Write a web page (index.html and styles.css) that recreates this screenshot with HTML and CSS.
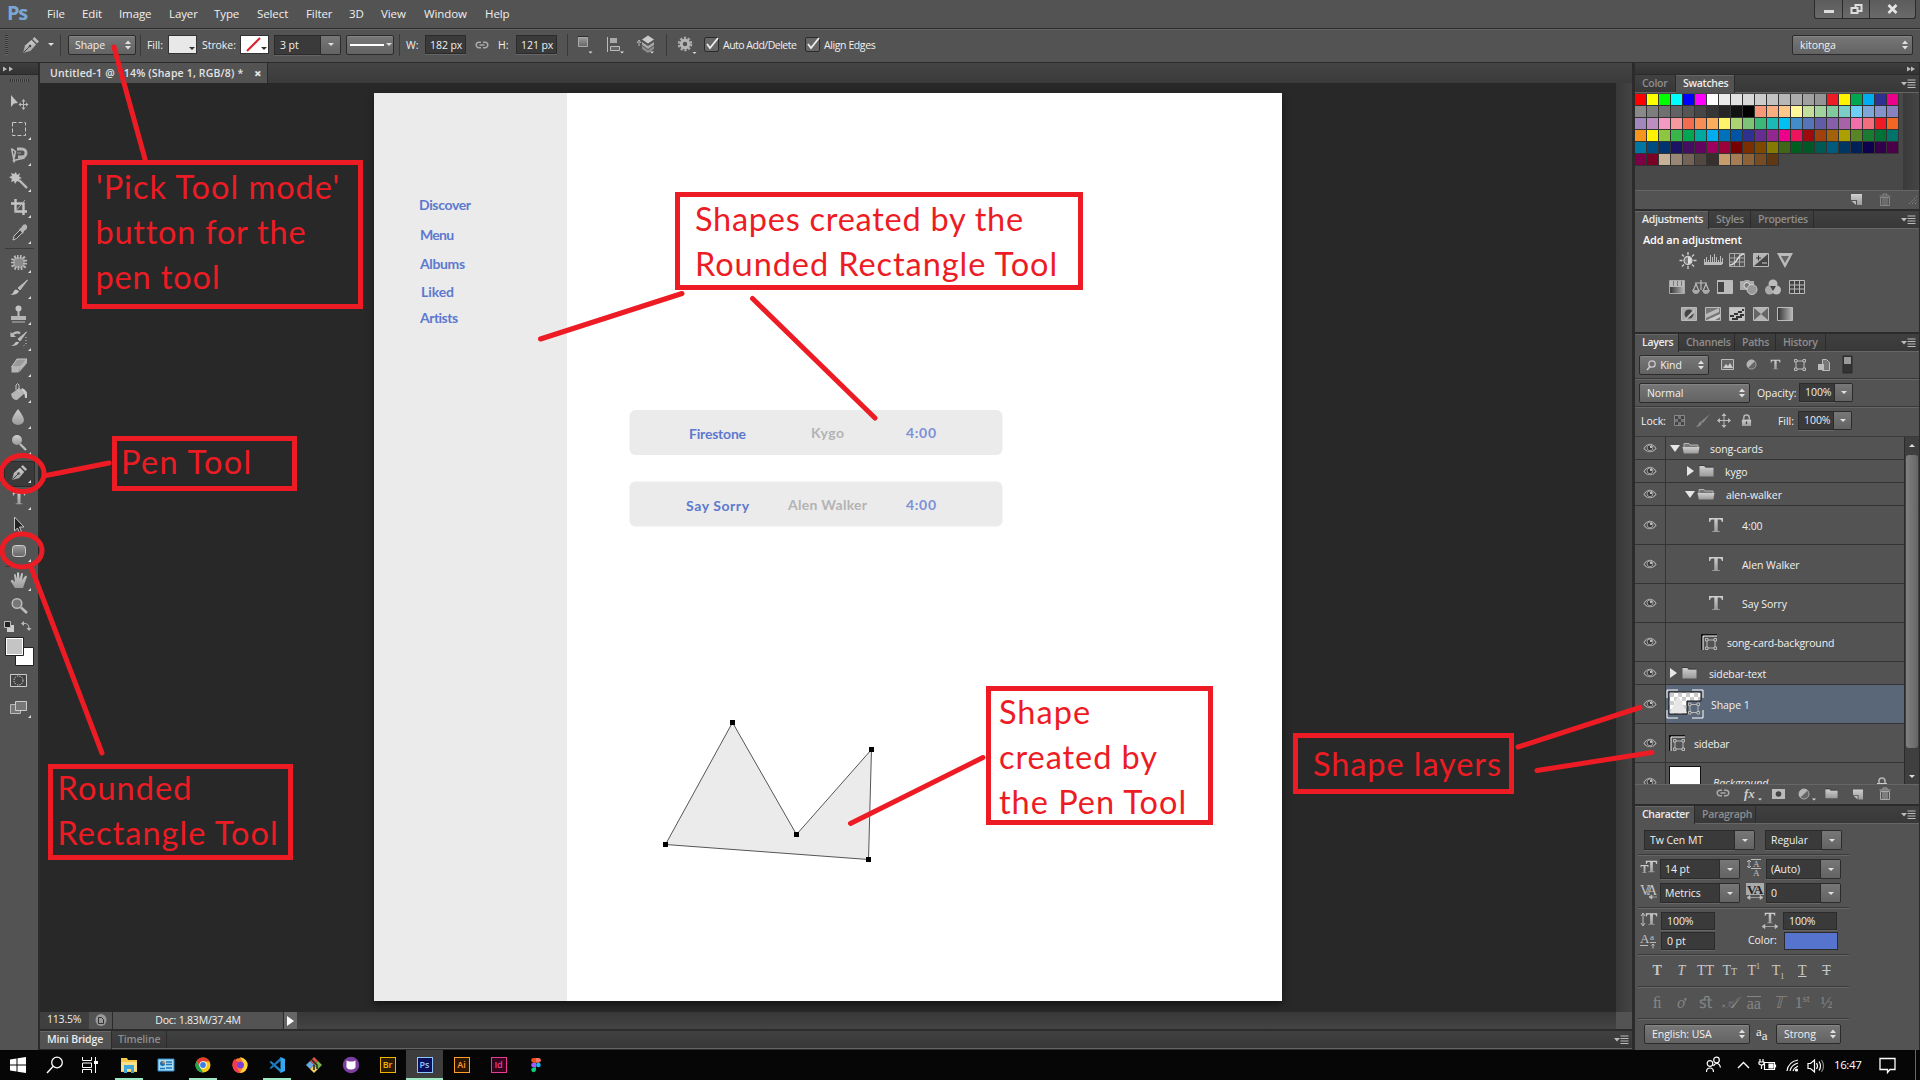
FILE: index.html
```html
<!DOCTYPE html>
<html lang="en">
<head>
<meta charset="utf-8">
<title>Untitled-1 @ 114% (Shape 1, RGB/8)</title>
<link rel="stylesheet" href="styles.css">
</head>
<body>
<svg class="defs" width="0" height="0">
  <defs>
    <linearGradient id="g" x1="0" y1="0" x2="0" y2="1"><stop offset="0" stop-color="#cfcfcf"/><stop offset="1" stop-color="#9a9a9a"/></linearGradient>
    <linearGradient id="gh" x1="0" y1="0" x2="1" y2="0"><stop offset="0" stop-color="#333"/><stop offset="1" stop-color="#bbb"/></linearGradient>
    <linearGradient id="gv" x1="0" y1="0" x2="0" y2="1"><stop offset="0" stop-color="#9a9a9a"/><stop offset="1" stop-color="#666"/></linearGradient>
    <pattern id="chk" width="8" height="8" patternUnits="userSpaceOnUse"><path fill="#fff" d="M0 0h8v8H0z"/><path fill="#ccc" d="M0 0h4v4H0zM4 4h4v4H4z"/></pattern>
  </defs>
  <symbol id="eye" viewBox="0 0 14 10"><path d="M1 5.500C3 2 5 1.200 7 1.200S11 2 13 5.500C11 8 9 8.800 7 8.800S3 8 1 5.500Z" fill="#484848" stroke="#aaa" stroke-width="1.100"/><circle cx="7" cy="4.900" r="2.900" fill="#3a3a3a" stroke="#aaa" stroke-width=".9"/><circle cx="8" cy="4" r="1.100" fill="#ddd"/></symbol>
  <symbol id="fopen" viewBox="0 0 18 12"><path d="M2 5V1.500h5L8 3h8v2" fill="#777" stroke="#b5b5b5"/><path d="M.5 5h17l-1.200 6.500H1.800Z" fill="url(#g)"/></symbol>
  <symbol id="fclosed" viewBox="0 0 15 12"><path d="M.5 1h5l1 1.500h8v9H.5Z" fill="url(#g)"/><path d="M0 .5h5.500l1 1.500h8" fill="none" stroke="#333" stroke-width=".7"/></symbol>
  <symbol id="tee" viewBox="0 0 16 16"><path d="M1 1h14v4h-1.200c-.3-1.800-.8-2.500-2.500-2.500H9.700V13c0 .9.500 1.200 2.300 1.300V15H4v-.7c1.800-.1 2.300-.4 2.300-1.300V2.500H4.700C3 2.500 2.500 3.200 2.200 5H1Z" fill="url(#g)"/></symbol>
  <symbol id="vec" viewBox="0 0 12 12"><path d="M2 2h8v8H2z" fill="none" stroke="#b9b9b9"/><g fill="#555" stroke="#c4c4c4" stroke-width=".9"><path d="M.5.500h2.500V3H.5zM9 .5h2.500V3H9zM.5 9h2.500v2.500H.5zM9 9h2.500v2.500H9z"/></g></symbol>
  <symbol id="pen" viewBox="0 0 18 18"><path d="M1 17 3 9.500 9.500 4 14 8.500 8.500 15Z" fill="url(#g)"/><path d="M1.500 16.500 7.500 10.500" stroke="#444"/><circle cx="8" cy="10" r="1.300" fill="#444"/><path d="M10.500 3 12.500 1 17 5.500 15 7.500Z" fill="#bbb"/></symbol>
  <symbol id="flyout" viewBox="0 0 15 10"><path d="M0 3h6L3 6.500z" fill="#bbb"/><path d="M6.500 1h8M6.500 3.500h8M6.500 6h8M6.500 8.500h8" stroke="#bbb"/></symbol>
  <symbol id="updown" viewBox="0 0 6 10"><path d="M0 4 3 .5 6 4ZM0 6l3 3.500L6 6Z" fill="#e0e0e0"/></symbol>
  <symbol id="newp" viewBox="0 0 11 11"><path d="M0 0h11v11H6V6H0Z" fill="url(#g)"/><path d="M.5 7H5v4Z" fill="#bbb"/></symbol>
  <symbol id="trash" viewBox="0 0 12 13"><path d="M.5 3h11M4 2.500V1h4v1.500" stroke="#aaa" fill="none"/><path d="M1.500 4.500h9v8h-9zM4 4.500v8M6 4.500v8M8 4.500v8" stroke="#aaa" fill="none"/></symbol>
  <symbol id="link" viewBox="0 0 14 8"><path d="M6 1.200H4A2.800 2.800 0 0 0 4 6.800h2M8 1.200h2A2.800 2.800 0 0 1 10 6.800H8M4.500 4h5" fill="none" stroke="#aaa" stroke-width="1.500"/></symbol>
  <symbol id="halfc" viewBox="0 0 12 12"><circle cx="6" cy="6" r="5" fill="#666" stroke="#aaa"/><path d="M9.600 2.400A5 5 0 1 0 2.400 9.600Z" fill="#b5b5b5"/></symbol>
  <symbol id="lock" viewBox="0 0 12 14"><path d="M3 6V4a3 3 0 0 1 6 0v2" fill="none" stroke="#b5b5b5" stroke-width="1.600"/><path d="M1 6h10v7H1z" fill="url(#g)"/><path d="M6 8v3" stroke="#444" stroke-width="1.400"/></symbol>
</svg>

<header class="menubar">
  <span class="pslogo">Ps</span>
  <nav class="menus"><span class="m-file">File</span><span class="m-edit">Edit</span><span class="m-image">Image</span><span class="m-layer">Layer</span><span class="m-type">Type</span><span class="m-select">Select</span><span class="m-filter">Filter</span><span class="m-3d">3D</span><span class="m-view">View</span><span class="m-window">Window</span><span class="m-help">Help</span></nav>
  <div class="winbtns">
    <svg width="27" height="18"><path d="M9 11.500h10" stroke="#ddd" stroke-width="3"/></svg>
    <svg width="27" height="18"><path d="M12.500 5h6v6h-6z" fill="none" stroke="#ddd" stroke-width="2"/><path d="M8.500 8h6v5h-6z" fill="#555" stroke="#ddd" stroke-width="2"/></svg>
    <svg width="46" height="18"><path d="m18.500 5 8 8m0-8-8 8" stroke="#e6e6e6" stroke-width="2.600"/></svg>
  </div>
</header>

<section class="options">
  <i class="vgrip"></i>
  <svg class="o-pen" width="18" height="18"><use href="#pen"/></svg>
  <i class="caret o-caret"></i>
  <i class="vsep s1"></i>
  <span class="combo o-shape">Shape<svg width="6" height="10"><use href="#updown"/></svg></span>
  <i class="vsep s2"></i>
  <span class="o-fill">Fill:</span>
  <span class="chip c1"><i class="dk"></i></span>
  <span class="o-stroke">Stroke:</span>
  <span class="chip c2"><svg width="26" height="17"><path d="M6 15 19 2" stroke="#d8232a" stroke-width="2"/></svg><i class="dk"></i></span>
  <span class="field o-pt">3 pt</span><span class="drop o-ptd"><i class="caret"></i></span>
  <span class="combo o-line"><b></b><i class="caret"></i></span>
  <i class="vsep s3"></i>
  <span class="o-w">W:</span><span class="field o-wf">182 px</span>
  <svg class="o-link" width="14" height="8"><use href="#link"/></svg>
  <span class="o-h">H:</span><span class="field o-hf">121 px</span>
  <i class="vsep s4"></i>
  <svg class="o-ic1" width="100" height="26">
    <path d="M10.500 5.500h9v9h-9z" fill="url(#gv)" stroke="#aaa"/><path d="M10 4.500h10" stroke="#2c2c2c"/>
    <path d="M39.500 5v15" stroke="#bbb"/><path d="M42 6h7v5h-7z" fill="#aaa"/><path d="M42.500 14.500h9v4h-9z" fill="#666" stroke="#bbb"/>
    <path d="M71 14V9.500M69 11l2-3 2 3" fill="none" stroke="#bbb"/>
    <path d="M74 14v3l6 4 6-4v-3l-6 4z" fill="#8c8c8c"/><path d="M74 10v3l6 4 6-4v-3l-6 4z" fill="#a8a8a8"/><path d="m74 7.500 6-4 6 4-6 4z" fill="#cacaca"/>
    <path d="M20.500 19.500h4l-2 2zM52 19.500h4l-2 2zM82 19.500h4l-2 2z" fill="#ddd"/>
  </svg>
  <i class="vsep s5"></i>
  <svg class="o-gear" width="20" height="22"><circle cx="8" cy="10" r="5.800" fill="none" stroke="#aaa" stroke-width="3" stroke-dasharray="2.200 1.450"/><circle cx="8" cy="10" r="3.700" fill="none" stroke="#b5b5b5" stroke-width="3"/><path d="M15.500 18h4l-2 2z" fill="#ddd"/></svg>
  <span class="cb"><svg width="16" height="16"><path d="m4 7 3 4L15 1" fill="none" stroke="#eee" stroke-width="1.800"/></svg></span><span class="o-auto">Auto Add/Delete</span>
  <span class="cb cb2"><svg width="16" height="16"><path d="m4 7 3 4L15 1" fill="none" stroke="#eee" stroke-width="1.800"/></svg></span><span class="o-align">Align Edges</span>
  <span class="combo o-user">kitonga<svg width="6" height="10"><use href="#updown"/></svg></span>
</section>

<main class="workspace">
  <aside class="tools">
    <div class="collapse"><svg width="12" height="6"><path d="M0 .500 4 3 0 5.500zM6 .500l4 2.500-4 2.500z" fill="#bbb"/></svg></div>
    <i class="hgrip"></i>
    <svg class="tool" viewBox="0 0 26 26"><path d="M5 4v12l3-3.500 4-.500Z" fill="#c4c4c4"/><path d="M17.500 9v9M13 13.500h9" stroke="#bbb"/><path d="m17.500 8 2 2.500h-4zM17.500 19l2-2.500h-4zM12.500 13.500l2.500-2v4zM22.500 13.500l-2.500-2v4z" fill="#bbb"/></svg>
    <svg class="tool" viewBox="0 0 26 26"><path d="M6.500 5.500h13v13h-13z" fill="none" stroke="#c8c8c8" stroke-dasharray="4 2"/><path d="M22 23h3v-3z" fill="#ddd"/></svg>
    <svg class="tool" viewBox="0 0 26 26"><path d="m5.500 5.500 4 3-2 9 11-2.500M5.500 5.500l3 14" fill="none" stroke="#bbb" stroke-width="1.500"/><path d="M11 6h5a4 4 0 0 1 0 8h-4" fill="none" stroke="#b5b5b5" stroke-width="3"/><path d="M11 10h4" stroke="#999"/><path d="M22 23h3v-3z" fill="#ddd"/></svg>
    <svg class="tool" viewBox="0 0 26 26"><path d="m10 3 1 3 3-2-1 3.500 3 1.500-3 1 1 3-3-1-2 3-1-3-3 1 1-3-3-2 3-1-1-3 3 1Z" fill="#c4c4c4"/><path d="m13 11 8 8" stroke="#bbb" stroke-width="2.400"/><path d="M22 23h3v-3z" fill="#ddd"/></svg>
    <svg class="tool" viewBox="0 0 26 26"><path d="M9.500 4v12.500H21M5 8.500h12.500V20" fill="none" stroke="#c4c4c4" stroke-width="2.400"/><path d="M9 17 19 5" stroke="#aaa"/><path d="M22 23h3v-3z" fill="#ddd"/></svg>
    <svg class="tool" viewBox="0 0 26 26"><path d="m7 19 1-4 7-7 2.500 2.500-7 7Z" fill="#444" stroke="#c4c4c4"/><path d="m13 8 2-1 2-3q3-2 4 1t-3 5l-1 3Z" fill="#b5b5b5"/><path d="M22 23h3v-3z" fill="#ddd"/></svg>
    <i class="tsep"></i>
    <svg class="tool" viewBox="0 0 26 26"><rect x="7" y="7" width="12" height="11" rx="4" fill="#8a8a8a"/><rect x="7" y="7" width="12" height="11" rx="4" fill="none" stroke="#bbb" stroke-width="4" stroke-dasharray="1.500 1.500"/><path d="M22 23h3v-3z" fill="#ddd"/></svg>
    <svg class="tool" viewBox="0 0 26 26"><path d="M21.500 4 14 14l-2-2Z" fill="#bbb" stroke="#bbb"/><path d="M13 15q-1 4-9 4 3-1 4-4t5 0Z" fill="#c4c4c4"/><path d="M22 23h3v-3z" fill="#ddd"/></svg>
    <svg class="tool" viewBox="0 0 26 26"><circle cx="12.500" cy="6.500" r="3" fill="#c4c4c4"/><path d="M11.500 9h2v5h-2z" fill="#bbb"/><path d="M5 14h15v4H5z" fill="#b5b5b5"/><path d="M6 20h13" stroke="#bbb"/><path d="M22 23h3v-3z" fill="#ddd"/></svg>
    <svg class="tool" viewBox="0 0 26 26"><path d="M20.500 4 14 13l-2-2Z" fill="#bbb" stroke="#bbb"/><path d="M13 14q-1 4-8 4 3-1 4-3t4-1Z" fill="#c4c4c4"/><path d="M5 7.500q6-5 9-2" fill="none" stroke="#bbb" stroke-width="2"/><path d="M4.500 4v5H10Z" fill="#bbb"/><path d="M20 9v7l-4 3" fill="none" stroke="#ccc" stroke-dasharray="1 2"/><path d="M22 23h3v-3z" fill="#ddd"/></svg>
    <svg class="tool" viewBox="0 0 26 26"><path d="M11 5h10l-7 8H5.500Z" fill="#9a9a9a" stroke="#c4c4c4"/><path d="M5.500 13H14l-1.500 5.500H5.500ZM14 13l7-8v4l-8 9.500Z" fill="#b5b5b5"/><path d="M22 23h3v-3z" fill="#ddd"/></svg>
    <svg class="tool" viewBox="0 0 26 26"><path d="m5 14 8-6 6 5-8 7q-5 0-6-6Z" fill="#b5b5b5"/><path d="M10 10V5q1.500-3 3 0v7" fill="none" stroke="#c4c4c4"/><path d="M16 8q6 2 5 10h-2q0-6-4-8Z" fill="#ccc"/><path d="M22 23h3v-3z" fill="#ddd"/></svg>
    <svg class="tool" viewBox="0 0 26 26"><path d="M12 3q6 8 6 11a6 5 0 0 1-12 0q0-3 6-11Z" fill="url(#g)"/><path d="M22 23h3v-3z" fill="#ddd"/></svg>
    <svg class="tool" viewBox="0 0 26 26"><circle cx="11" cy="8" r="5" fill="url(#g)"/><path d="m14 12 6 6" stroke="#bbb" stroke-width="2.400"/><path d="M22 23h3v-3z" fill="#ddd"/></svg>
    <div class="toolsel"><svg class="tool" viewBox="0 0 26 26"><use href="#pen" x="5" y="3" width="17" height="17"/><path d="M22 22h3v-3z" fill="#ddd"/></svg></div>
    <svg class="tool" viewBox="0 0 26 26"><use href="#tee" x="6" y="4" width="14" height="14"/><path d="M22 23h3v-3z" fill="#ddd"/></svg>
    <svg class="tool" viewBox="0 0 26 26"><path d="M8.500 4v14l3-3 2 4.500 2-1-2-4.500h4.500Z" fill="#222" stroke="#c4c4c4"/><path d="M22 23h3v-3z" fill="#ddd"/></svg>
    <svg class="tool" viewBox="0 0 26 26"><rect x="6.500" y="6.500" width="13" height="11" rx="3" fill="url(#gv)" stroke="#ccc"/><path d="M22 23h3v-3z" fill="#ddd"/></svg>
    <i class="tsep"></i>
    <svg class="tool" viewBox="0 0 26 26"><path d="M9 20 4.500 13l1.500-1.500 3 2.500L8 6.500l1.500-.5 1.500 5V4.500h2L13.500 11 15.500 5l1.500.5-1 6.500 3.500-4.500 1.500 1L17 20Z" fill="url(#g)"/><path d="M22 23h3v-3z" fill="#ddd"/></svg>
    <svg class="tool" viewBox="0 0 26 26"><circle cx="11" cy="9.500" r="4.800" fill="#777" stroke="#bbb" stroke-width="1.500"/><path d="m15 13.500 6 5.500" stroke="#bbb" stroke-width="2.600"/></svg>
    <svg class="mini" width="32" height="14"><path d="M7 5h7v7H7z" fill="#ccc"/><path d="M4.500 1.500h6v6h-6z" fill="#222" stroke="#bbb"/><path d="M23 3.500q6-1 6 5" fill="none" stroke="#bbb"/><path d="M21 3.500 24 1v5zM26.500 8h5L29 11z" fill="#bbb"/></svg>
    <svg class="colors" width="32" height="32"><path d="M11.500 11.500h18v18h-18z" fill="#fff" stroke="#222"/><path d="M1.500 1.500h18v18h-18z" fill="#fff" stroke="#222"/><path d="M3 3h15v15H3z" fill="#c4c4c4"/></svg>
    <svg class="tool qm" viewBox="0 0 26 26"><path d="M4.500 6.500h16v12h-16z" fill="#444" stroke="#ccc"/><circle cx="12.500" cy="12.500" r="4.500" fill="none" stroke="#ddd" stroke-dasharray="1.200 1.200"/></svg>
    <svg class="tool" viewBox="0 0 26 26"><path d="M4.500 10.500h10v9h-10z" fill="#777" stroke="#bbb"/><path d="M9.500 7.500h11v9h-11z" fill="#777" stroke="#ccc"/><path d="M22 24h3v-3z" fill="#ddd"/></svg>
  </aside>

  <section class="doc">
    <div class="doctabs"><span class="doctab"><span>Untitled-1 @ 114% (Shape 1, RGB/8) *</span><b>×</b></span></div>
    <div class="stage">
      <div class="canvas">
        <svg class="artboard" width="908" height="908" viewBox="374 93 908 908">
          <path d="M374 93h908v908H374z" fill="#fff"/><path d="M374 93h193v908H374z" fill="#ebebeb"/>
          <g class="arttext">
            <text x="419" y="210" textLength="52">Discover</text>
            <text x="420" y="240" textLength="34">Menu</text>
            <text x="420" y="269" textLength="45">Albums</text>
            <text x="421" y="297" textLength="33">Liked</text>
            <text x="420" y="323" textLength="38">Artists</text>
            <rect x="629.500" y="410" width="373" height="45" rx="6"/><rect x="629.500" y="481.500" width="373" height="45" rx="6"/>
            <text x="689" y="439" textLength="57">Firestone</text><text class="gray" x="811" y="438" textLength="33">Kygo</text><text class="soft" x="906" y="438" textLength="30">4:00</text>
            <text x="686" y="510.500" textLength="63">Say Sorry</text><text class="gray" x="788" y="509.500" textLength="79">Alen Walker</text><text class="soft" x="906" y="509.500" textLength="30">4:00</text>
          </g>
          <path d="M665.500 844.500 732.500 722.500 796.500 834.500 871.500 749.500 868.500 859.500Z" fill="#ebebeb" stroke="#555" stroke-width="1"/>
          <path d="M663 842h5v5h-5zM730 720h5v5h-5zM794 832h5v5h-5zM869 747h5v5h-5zM866 857h5v5h-5z" fill="#000"/>
        </svg>
      </div>
      <div class="vscroll"></div>
    </div>
    <div class="status"><span class="zoom">113.5%</span><span class="sicon"><svg width="12" height="14"><ellipse cx="6" cy="7" rx="5.500" ry="6" fill="#999"/><path d="M3.500 4.500h3l2 2v4h-5z" fill="none" stroke="#333"/></svg></span><span class="docsize">Doc: 1.83M/37.4M</span><span class="sarrow"><i></i></span><span class="hscroll"></span><span class="corner"></span></div>
    <div class="tabs bottomtabs"><span class="on b1">Mini Bridge</span><span class="b2">Timeline</span><svg width="15" height="10"><use href="#flyout"/></svg></div>
  </section>

  <aside class="dock">
    <div class="collapse dockc"><svg width="12" height="6"><path d="M0 .500 4 3 0 5.500zM4 .500l4 2.500-4 2.500z" fill="#bbb"/></svg></div>
    <div class="tabs"><span class="t1">Color</span><span class="on t2">Swatches</span><svg width="15" height="10"><use href="#flyout"/></svg></div>
    <div class="swatchbody"><div class="swatches" id="swatches"></div><i class="swscroll"></i></div>
    <div class="swfoot"><svg width="11" height="11"><use href="#newp"/></svg><svg class="dim" width="12" height="13"><use href="#trash"/></svg><svg width="10" height="10"><path d="M1 9 9 1M4 9l5-5M7 9l2-2" stroke="#999" stroke-dasharray="1 1.500"/></svg></div>
    <div class="tabs gap"><span class="on t3">Adjustments</span><span class="t4">Styles</span><span class="t5">Properties</span><svg width="15" height="10"><use href="#flyout"/></svg></div>
    <div class="adjust">
      <strong>Add an adjustment</strong>
      <svg width="142" height="75" class="adjicons">
        <g transform="translate(11,0)"><circle cx="8" cy="8.500" r="4" fill="#777" stroke="#ccc" stroke-width="1.300"/><path d="M8 5v7a3.500 3.500 0 0 0 0-7" fill="#ddd"/><path d="M8 0v3M8 14v3M-.5 8.500h3M13.500 8.500h3M2 2.500l2 2M12 12.500l2 2M14 2.500l-2 2M4 12.500l-2 2" stroke="#ccc" stroke-width="1.400"/></g>
        <path d="M35.500 12V7m2 5V5m2 7V8m2 4V3m2 9V5m2 7V2m2 10V5m2 7V8m2 4V4m2 8V6" stroke="#bbb"/><path d="M35 10h18v3H35z" fill="#bbb"/>
        <path d="M60.500 1.500h15v13h-15zM65.500 2v12M70.500 2v12M61 6h14M61 10h14" fill="#555" stroke="#aaa"/><path d="M61 13c8 0 6-10 14-11" stroke="#ddd" fill="none" stroke-width="1.500"/>
        <path d="M84.500 1.500h15v13h-15z" fill="#444" stroke="#bbb"/><path d="M85 14V2h14Z" fill="#b5b5b5"/><path d="M87 6h5M89.500 3.500v5" stroke="#333"/><path d="M93 11h5" stroke="#ccc"/>
        <path d="M108 1h16l-8 15Z" fill="#bbb"/><path d="M112 4h8l-4 7Z" fill="#666"/>
        <g transform="translate(0,27)"><path d="M.5 1.500h15v13H.5z" fill="url(#gh)" stroke="#aaa"/><path d="M1 2h14v6H1z" fill="#bbb"/><path d="M4.500 2v5M8.500 2v5M12.500 2v5" stroke="#777"/>
        <path d="M32 1v10M26 4h12M24 12l3-7 3 7M34 12l3-7 3 7" stroke="#bbb" fill="none" stroke-width="1.200"/><path d="M23 11h8q-1 4-4 4t-4-4M33 11h8q-1 4-4 4t-4-4" fill="#aaa"/>
        <path d="M48.500 1.500h15v13h-15z" fill="#bbb" stroke="#bbb"/><path d="M49 3h6v10h-6z" fill="#444"/>
        <path d="M71 2h4l1-1h4l1 1h4v9H71z" fill="#aaa"/><circle cx="78" cy="6.500" r="3" fill="#777" stroke="#ddd"/><circle cx="83" cy="10.500" r="5" fill="#999" stroke="#ccc"/>
        <circle cx="104" cy="5" r="4.500" fill="#bbb"/><circle cx="100.500" cy="11" r="4.500" fill="#aaa"/><circle cx="107.500" cy="11" r="4.500" fill="#bbb"/><path d="m101 7 3 5 3-5z" fill="#444"/>
        <path d="M120.500 1.500h15v13h-15zM125.500 2v12M130.500 2v12M121 6h14M121 10h14" fill="#444" stroke="#bbb"/></g>
        <g transform="translate(0,54)"><path d="M12.500 1.500h15v13h-15z" fill="#aaa" stroke="#bbb"/><circle cx="20" cy="8" r="4.500" fill="#444"/><path d="M15 14 26 2v4L17 14Z" fill="#bbb"/>
        <path d="M36.500 1.500h15v13h-15z" fill="#777" stroke="#bbb"/><path d="M37 8 50 2v4L37 12z" fill="#bbb"/><path d="m38 14 13-6v3l-5 3z" fill="#ccc"/>
        <path d="M60.500 1.500h15v13h-15z" fill="#c4c4c4" stroke="#bbb"/><path d="M61 9h4V7h4V5h4V3h2v2h-2v2h-4v2h-4v2h-4zM63 14v-2h4v-2h4V8h4v2h-2v2h-4v2z" fill="#333"/>
        <path d="M84.500 1.500h15v13h-15z" fill="#666" stroke="#bbb"/><path d="m85 2 7 6 7-6zM85 14l7-6 7 6z" fill="#b5b5b5"/>
        <path d="M108.500 1.500h15v13h-15z" fill="url(#gh)" stroke="#bbb"/></g>
      </svg>
    </div>
    <div class="tabs gap ltabs"><span class="on t6">Layers</span><span class="t7">Channels</span><span class="t8">Paths</span><span class="t9">History</span><svg width="15" height="10"><use href="#flyout"/></svg></div>
    <div class="lrow lf"><span class="combo kind"><svg width="10" height="11"><circle cx="6" cy="4" r="3.200" fill="none" stroke="#ccc" stroke-width="1.300"/><path d="M4 6.500 1 10" stroke="#ccc" stroke-width="1.600"/></svg><span>Kind</span><svg width="6" height="10"><use href="#updown"/></svg></span>
      <svg class="ficons" width="132" height="20"><path d="M.5 4.500h12v10H.5z" fill="#666" stroke="#bbb"/><path d="m2 13 3-4 2 2 2-3 3 5z" fill="#ccc"/><use href="#halfc" x="25" y="4" width="11" height="11"/><use href="#tee" x="49" y="4" width="11" height="11"/><use href="#vec" x="73" y="4" width="12" height="12"/><path d="M101.500 4.500h4l3 3v8h-7z" fill="#777" stroke="#bbb"/><path d="M97 9h6v6h-6z" fill="#bbb"/><path d="M122 1h9v17h-9z" fill="#333" stroke="#2a2a2a"/><path d="M123 2h7v7h-7z" fill="#999"/></svg></div>
    <div class="lrow lb"><span class="combo blend">Normal<svg width="6" height="10"><use href="#updown"/></svg></span><span class="l-op">Opacity:</span><span class="field pct">100%</span><span class="drop"><i class="caret"></i></span></div>
    <div class="lrow lk"><span class="l-lock">Lock:</span><svg class="lkic" width="78" height="16"><path d="M.5 2.500h10v10H.5z" fill="#777" stroke="#888"/><path d="M1 3h3v3H1zM7 3h3v3H7zM4 6h3v3H4zM1 9h3v3H1zM7 9h3v3H7z" fill="#444"/><path d="M36 1 29 10l-2-1.500ZM28 10q-1 4-7 4 3-1 4-4t3 0Z" fill="#888"/><path d="M50 1v13M43.500 7.500h13" stroke="#bbb"/><path d="m50 0 2.500 3h-5zM50 15l2.500-3h-5zM43 7.500 46 5v5zM57 7.500 54 5v5z" fill="#bbb"/><use href="#lock" x="67" y="1" width="11" height="13"/></svg><span class="l-fill">Fill:</span><span class="field pct">100%</span><span class="drop"><i class="caret"></i></span></div>
    <div class="layers">
      <div class="list">
        <div class="ly s"><span class="ey"><svg width="14" height="10"><use href="#eye"/></svg></span><i class="tri dn d0"></i><svg width="18" height="12"><use href="#fopen"/></svg><span class="n1">song-cards</span></div>
        <div class="ly s"><span class="ey"><svg width="14" height="10"><use href="#eye"/></svg></span><i class="tri rt d1"></i><svg width="15" height="12"><use href="#fclosed"/></svg><span class="n2">kygo</span></div>
        <div class="ly s"><span class="ey"><svg width="14" height="10"><use href="#eye"/></svg></span><i class="tri dn d2"></i><svg width="18" height="12"><use href="#fopen"/></svg><span class="n3">alen-walker</span></div>
        <div class="ly"><span class="ey"><svg width="14" height="10"><use href="#eye"/></svg></span><svg class="lt" width="16" height="16"><use href="#tee"/></svg><span class="n4">4:00</span></div>
        <div class="ly"><span class="ey"><svg width="14" height="10"><use href="#eye"/></svg></span><svg class="lt" width="16" height="16"><use href="#tee"/></svg><span class="n4">Alen Walker</span></div>
        <div class="ly"><span class="ey"><svg width="14" height="10"><use href="#eye"/></svg></span><svg class="lt" width="16" height="16"><use href="#tee"/></svg><span class="n4">Say Sorry</span></div>
        <div class="ly"><span class="ey"><svg width="14" height="10"><use href="#eye"/></svg></span><svg class="lv" width="16" height="16"><path d="M1 16V1h15" fill="none" stroke="#111" stroke-width="2"/><path d="M2 16V2h14" fill="none" stroke="#fff"/><use href="#vec" x="4" y="4" width="12" height="12"/></svg><span class="n5">song-card-background</span></div>
        <div class="ly s"><span class="ey"><svg width="14" height="10"><use href="#eye"/></svg></span><i class="tri rt d0"></i><svg class="f4" width="15" height="12"><use href="#fclosed"/></svg><span class="n6">sidebar-text</span></div>
        <div class="ly sel"><span class="ey"><svg width="14" height="10"><use href="#eye"/></svg></span><svg class="thumb" width="38" height="30"><path d="M1 9V1h11M26 1h11v8M37 21v8H26M12 29H1v-8" fill="none" stroke="#fff"/><path d="M3 3h32v9H21v13H3z" fill="url(#chk)" stroke="#111"/><path d="m4 24 8-18 9 18z" fill="#e6e6e6"/><use href="#vec" x="22" y="13" width="12" height="13"/></svg><span class="n7">Shape 1</span></div>
        <div class="ly"><span class="ey"><svg width="14" height="10"><use href="#eye"/></svg></span><svg class="lv2" width="16" height="16"><path d="M1 16V1h15" fill="none" stroke="#111" stroke-width="2"/><path d="M2 16V2h14" fill="none" stroke="#fff"/><use href="#vec" x="4" y="4" width="12" height="12"/></svg><span class="n8">sidebar</span></div>
        <div class="ly"><span class="ey"><svg width="14" height="10"><use href="#eye"/></svg></span><i class="bgthumb"></i><span class="n9">Background</span><svg class="bglock" width="12" height="14"><use href="#lock"/></svg></div>
      </div>
      <div class="lscroll"><i class="up"></i><i class="thumbbar"></i><i class="down"></i></div>
    </div>
    <div class="lfoot"><svg width="285" height="18"><use href="#link" x="81" y="4" width="14" height="8"/><text x="109" y="13">fx</text><path d="M137 4h13v10h-13z" fill="#bbb"/><circle cx="143.500" cy="9" r="2.800" fill="#444"/><use href="#halfc" x="163" y="3" width="12" height="12"/><use href="#fclosed" x="190" y="3" width="13" height="11"/><use href="#newp" x="218" y="4" width="10" height="11"/><use href="#trash" x="244" y="2" width="12" height="13"/><path d="M123 13.500h4l-2 2zM177 13.500h4l-2 2z" fill="#ddd"/></svg></div>
    <div class="tabs gap"><span class="on t10">Character</span><span class="t11">Paragraph</span><svg width="15" height="10"><use href="#flyout"/></svg></div>
    <div class="char">
      <div class="cr r1"><span class="field fa">Tw Cen MT</span><span class="drop"><i class="caret"></i></span><span class="field fb">Regular</span><span class="drop"><i class="caret"></i></span></div>
      <hr>
      <div class="cr r2"><svg width="18" height="16"><use href="#tee" x="0" y="5" width="9" height="10"/><use href="#tee" x="5" y="0" width="13" height="15"/></svg><span class="field fc">14 pt</span><span class="drop"><i class="caret"></i></span><svg class="i2" width="18" height="18"><path d="M3 1v8M1 3l2-2 2 2M1 7l2 2 2-2M5 .500h10M5 9.500h10" fill="none" stroke="#bbb"/><text class="ti s9" x="7" y="8">A</text><text class="ti s9" x="7" y="17">A</text></svg><span class="field fd">(Auto)</span><span class="drop"><i class="caret"></i></span></div>
      <div class="cr r3"><svg width="18" height="16"><text class="ti s14" x="0" y="12" textLength="17">V/A</text><path d="M9 14h8M9 14l3-2v4z" stroke="#bbb" fill="#bbb" stroke-width=".7"/></svg><span class="field fc">Metrics</span><span class="drop"><i class="caret"></i></span><svg class="i2" width="18" height="17"><path d="M0 0h18v12H0z" fill="#aaa"/><text class="ti s13 dkt" x="1" y="11" textLength="16">VA</text><path d="M1 14.500h16M1 14.500l3-2v4zM17 14.500l-3-2v4z" stroke="#bbb" fill="#bbb" stroke-width=".7"/></svg><span class="field fd">0</span><span class="drop"><i class="caret"></i></span></div>
      <hr>
      <div class="cr r4"><svg width="18" height="16"><path d="M3 1v13M1 4l2-3 2 3M1 11l2 3 2-3" fill="none" stroke="#bbb"/><use href="#tee" x="5" y="0" width="13" height="14"/></svg><span class="field fe">100%</span><svg class="i4" width="18" height="17"><use href="#tee" x="2" y="0" width="14" height="12"/><path d="M1 14.500h16M1 14.500l3-2v4zM17 14.500l-3-2v4z" stroke="#bbb" fill="#bbb" stroke-width=".7"/></svg><span class="field fe f2">100%</span></div>
      <div class="cr r5"><svg width="18" height="16"><text class="ti s13" x="0" y="11">A</text><text class="ti s9" x="10" y="8">a</text><path d="M0 13.500h8M10 10.500h6M13 16.500v-4M11.500 13.500 13 12l1.500 1.500" fill="none" stroke="#bbb"/></svg><span class="field fe">0 pt</span><span class="l-color">Color:</span><i class="colorbox"></i></div>
      <hr>
      <div class="glyphs ga"><b>T</b><i>T</i><span>TT</span><span>T<small>T</small></span><span>T<sup>1</sup></span><span>T<sub>1</sub></span><u>T</u><s>T</s></div>
      <hr>
      <div class="glyphs gb"><span>ﬁ</span><i>ơ</i><span>ﬆ</span><i>𝒜</i><span class="over">aa</span><i>𝕋</i><span>1<sup>st</sup></span><span>½</span></div>
      <hr>
      <div class="cr r6"><span class="combo lang">English: USA<svg width="6" height="10"><use href="#updown"/></svg></span><span class="aa">a<sub>a</sub></span><span class="combo strong">Strong<svg width="6" height="10"><use href="#updown"/></svg></span></div>
    </div>
  </aside>
</main>

<footer class="taskbar">
  <span class="tb"><svg width="18" height="18"><path d="M1 3.500 7.500 2.500V8.500H1zM8.500 2.300 17 1v7.500H8.500zM1 9.500h6.500v6L1 14.500zM8.500 9.500H17V17l-8.500-1.300z" fill="#fff"/></svg></span>
  <span class="tb"><svg width="18" height="18"><circle cx="11" cy="6.500" r="5.300" fill="none" stroke="#fff" stroke-width="1.300"/><path d="m7 10.500-6 6.500" stroke="#fff" stroke-width="1.400"/></svg></span>
  <span class="tb tv"><svg width="18" height="18"><path d="M1.500 1v3.500h9V1M1.500 17v-3.500h9V17M1.500 7h9v4.500h-9zM14.500 1v16" fill="none" stroke="#fff"/><path d="M13 5h4v3h-4z" fill="#fff"/></svg></span>
  <span class="tb run"><svg width="18" height="18"><path d="M1 2h6l1 2h9v12H1z" fill="#f5c84c"/><path d="M1 6h16v9H1z" fill="#fbe08a"/><path d="M4 17V9h10v8h-3v-4H7v4z" fill="#3fa7dc"/></svg></span>
  <span class="tb"><svg width="18" height="18"><path d="M1 3h16v12H1z" fill="#a8dcf7" stroke="#2c8ac9"/><path d="M9 6h6M9 8.500h6M9 12h6M3 12.500h5" stroke="#1f78b8" stroke-width="1.400"/><circle cx="5.500" cy="7.500" r="2.500" fill="#1b6fb0"/><path d="M5.500 7.500V5A2.500 2.500 0 0 1 8 7.500z" fill="#f08a3c"/></svg></span>
  <span class="tb run"><svg width="18" height="18"><circle cx="9" cy="9" r="7.500" fill="#f9c814"/><path d="M2.500 5.200A7.500 7.500 0 0 1 15.600 5.400H9L6 11Z" fill="#e33b2e"/><path d="M2.500 5.200 6.500 12l2.500 4.500A7.500 7.500 0 0 1 2.500 5.200Z" fill="#23a455"/><circle cx="9" cy="9" r="3.700" fill="#fff"/><circle cx="9" cy="9" r="2.900" fill="#3b7ded"/></svg></span>
  <span class="tb"><svg width="18" height="18"><circle cx="9" cy="9.500" r="7.500" fill="#ff7a22"/><path d="M9 1q8 2 7.500 8.500T9 17Q15 9 9 1Z" fill="#ffd43a"/><path d="M1.500 9q0-4 2-6 1 2 4 3-4 4 2 11-8-1-8-8Z" fill="#f23a55"/><circle cx="9.500" cy="9" r="3.500" fill="#7a42d8"/></svg></span>
  <span class="tb run"><svg width="18" height="18"><path d="M1.500 6 3 5l10 8.500V17Z" fill="#1f87cf"/><path d="M1.500 12 3 13 13 4.500V1Z" fill="#1877bd"/><path d="m12.500 1 4.500 2v12l-4.500 2z" fill="#35a8f0"/></svg></span>
  <span class="tb"><svg width="18" height="18"><path d="m9 1 4 4-4 4-4-4z" fill="#e2533d"/><path d="m5 5 4 4-4 4-4-4z" fill="#6aa8e6"/><path d="m13 5 4 4-4 4-4-4z" fill="#79b84f"/><path d="m9 9 4 4-4 4-4-4z" fill="#f2cf63"/><path d="m6 3 6 6v4M9 9v5" stroke="#222" fill="none" stroke-width="1.500"/></svg></span>
  <span class="tb"><svg width="18" height="18"><circle cx="9" cy="9" r="8.200" fill="#7c3fa0"/><path d="M4.500 4.500 7 5.500h4l2.500-1v4q1 5-4.500 5t-4.500-5z" fill="#fff"/></svg></span>
  <span class="tb"><b class="app br">Br</b></span>
  <span class="tb run active"><b class="app ps">Ps</b></span>
  <span class="tb"><b class="app ai">Ai</b></span>
  <span class="tb"><b class="app id">Id</b></span>
  <span class="tb"><svg width="18" height="18"><path d="M9 2H6.500a2.300 2.300 0 0 0 0 4.700H9z" fill="#f24e1e"/><path d="M9 2h2.500a2.300 2.300 0 0 1 0 4.700H9z" fill="#ff7262"/><path d="M9 6.700H6.500a2.300 2.300 0 0 0 0 4.700H9z" fill="#a259ff"/><circle cx="11.400" cy="9" r="2.300" fill="#1abcfe"/><path d="M9 11.400H6.500A2.400 2.400 0 1 0 9 13.800z" fill="#0acf83"/></svg></span>
  <div class="tray">
    <svg width="120" height="20" fill="none" stroke="#fff" stroke-width="1.200"><circle cx="4" cy="8.500" r="2.800"/><path d="M.5 17q0-4 3.500-4t3.500 4"/><circle cx="10.500" cy="5" r="2.800"/><path d="M7.500 11q1-2.500 3.500-2.500t3.500 4"/><path d="m32 13 5.500-5.500L43 13" stroke-width="1.400"/><path d="M58.500 7.500h10v7h-10zM69.500 9.500v3"/><path d="M63 9h4v4h-4z" fill="#fff"/><path d="M54 4v3M57 4v3M53 7h5v2q-2 2-5 0zM55.500 10v4"/><path d="M81 16q1-9 11-11M84 16q1-6 8-8M87 16q1-3 5-5" /><circle cx="90.500" cy="15" r="1" fill="#fff"/><path d="M102 8.500h2.500l4-3.500v12l-4-3.500H102zM110.500 8q2 3 0 6M113 6.500q3 4.500 0 9"/><path d="M115.500 5q4 6 0 12" stroke="#888"/></svg>
    <span class="clock">16:47</span>
    <svg class="note" width="18" height="18"><path d="M1 2.500h15v11h-5l-2.500 3v-3H1z" fill="none" stroke="#fff" stroke-width="1.300"/></svg>
    <i class="peek"></i>
  </div>
</footer>

<svg class="notes" width="1920" height="1080">
  <g fill="none" stroke="#ed1c24" stroke-width="5">
    <rect x="84.500" y="162.500" width="276" height="144"/><rect x="114.500" y="438.500" width="180" height="50"/><rect x="50.500" y="766.500" width="240" height="91"/>
    <rect x="677.500" y="194.500" width="403" height="93"/><rect x="988.500" y="688.500" width="222" height="134"/><rect x="1295.500" y="735.500" width="216" height="56"/>
    <ellipse cx="22.500" cy="473.500" rx="21.500" ry="18"/><ellipse cx="22" cy="550.500" rx="20" ry="16.500"/>
    <path stroke-linecap="round" d="M114 47 145 159M46 475.500 109 463M31 567 102 753M540.500 339 682 293.500M752.500 298.500 875 418M850.500 823.500 983 757.500M1518 747 1640 707.500M1537 770.500 1652 752.500"/>
  </g>
  <g class="notetext">
    <text x="96" y="198.500" textLength="243">'Pick Tool mode'</text><text x="95.500" y="243.500" textLength="210">button for the</text><text x="95.500" y="288.500" textLength="124">pen tool</text>
    <text x="121" y="473.500" textLength="130">Pen Tool</text>
    <text x="57.500" y="799.500" textLength="134">Rounded</text><text x="57.500" y="844.500" textLength="220">Rectangle Tool</text>
    <text x="695" y="230.500" textLength="328">Shapes created by the</text><text x="695" y="275.500" textLength="362">Rounded Rectangle Tool</text>
    <text x="999" y="723.500" textLength="91">Shape</text><text x="999" y="768.500" textLength="158">created by</text><text x="999" y="813.500" textLength="187">the Pen Tool</text>
    <text x="1313" y="776" textLength="188">Shape layers</text>
  </g>
</svg>
<script src="script.js"></script>
</body>
</html>
```
FILE: styles.css
```css
* { box-sizing: border-box; }
body { margin: 0; width: 1920px; height: 1080px; overflow: hidden; position: relative; background: #535353; color: #f0f0f0; font: 10.5px/14px "Open Sans", "Noto Sans", sans-serif; letter-spacing: -.06px; }
svg { display: block; flex: none; }
.defs { position: absolute; }
svg text { white-space: pre; }

.menubar { display: flex; height: 29px; border-bottom: 1px solid #2b2b2b; background: #535353; }
.pslogo { width: 47px; padding-left: 7px; font: bold 20px/25px "Open Sans", sans-serif; color: #7ba7d7; letter-spacing: -1.2px; }
.menus { display: flex; flex: 1; font-size: 11.5px; line-height: 28px; letter-spacing: -.1px; }
.m-file { width: 35px; } .m-edit { width: 37px; } .m-image { width: 50px; } .m-layer { width: 45px; } .m-type { width: 43px; }
.m-select { width: 49px; } .m-filter { width: 43px; } .m-3d { width: 32px; } .m-view { width: 43px; } .m-window { width: 61px; }
.winbtns { display: flex; height: 19px; margin-right: 4px; border: 1px solid #2b2b2b; border-top: 0; border-radius: 0 0 3px 3px; background: linear-gradient(#5c5c5c, #6a6a6a); }
.winbtns svg + svg { border-left: 1px solid #2b2b2b; }

.options { display: flex; align-items: center; height: 34px; padding-bottom: 3px; border-top: 1px solid #666; border-bottom: 1px solid #2b2b2b; }
.vgrip { width: 3px; height: 20px; margin-left: 5px; background: repeating-linear-gradient(#333 0 1px, #666 1px 2px); }
.o-pen { margin-left: 14px; }
.caret { display: block; width: 0; border: 3px solid transparent; border-top: 3px solid #e0e0e0; border-bottom: 0; flex: none; }
.o-caret { margin-left: 8px; }
.vsep { width: 1px; height: 22px; background: #3a3a3a; flex: none; }
.combo { display: flex; align-items: center; justify-content: space-between; height: 20px; border: 1px solid #2b2b2b; border-radius: 2px; background: linear-gradient(#777, #636363); box-shadow: inset 0 1px #858585; flex: none; }
.s1 { margin-left: 6px; }
.o-shape { margin-left: 7px; width: 68px; padding: 0 4px 0 6px; }
.s2 { margin-left: 4px; }
.o-fill { margin-left: 6px; width: 21px; }
.chip { position: relative; width: 29px; height: 19px; border: 1px solid #333; background: #e8e8e8; flex: none; }
.c2 { background: #fff; margin-left: 6px; }
.dk { position: absolute; right: 1px; bottom: 3px; border: 3px solid transparent; border-top-color: #333; border-bottom: 0; }
.o-stroke { margin-left: 5px; width: 32px; }
.field { display: block; height: 20px; padding-left: 5px; line-height: 18px; border: 1px solid #2b2b2b; background: #3a3a3a; box-shadow: 0 1px #666; flex: none; }
.drop { display: flex; align-items: center; justify-content: center; width: 20px; height: 20px; border: 1px solid #2b2b2b; border-left: 0; border-radius: 0 2px 2px 0; background: linear-gradient(#777, #636363); flex: none; }
.o-pt { width: 47px; margin-left: 5px; }
.o-line { width: 48px; margin-left: 5px; padding: 0 1px 0 3px; }
.o-line b { width: 34px; height: 2px; background: #fff; }
.s3 { margin-left: 5px; }
.o-w { margin-left: 6px; width: 19px; }
.o-wf { width: 41px; } .o-hf { width: 41px; }
.o-wf, .o-hf { height: 19px; padding-left: 4px; white-space: nowrap; }
.o-link { margin-left: 9px; } .o-h { margin-left: 9px; width: 18px; }
.s4 { margin-left: 10px; }
.s5 { margin-left: -2px; }
.o-gear { margin-left: 10px; }
.cb { width: 15px; height: 15px; margin-left: 7px; border: 1px solid #2b2b2b; border-radius: 2px; background: #666; flex: none; }
.cb svg { margin: -1px 0 0 -2px; }
.o-auto { margin-left: 4px; width: 76px; white-space: nowrap; letter-spacing: -.5px; } .cb2 { margin-left: 6px; } .o-align { margin-left: 4px; letter-spacing: -.4px; }
.o-user { margin-left: auto; margin-right: 7px; width: 121px; padding: 0 4px 0 7px; }

.workspace { display: flex; height: 987px; background: #2b2b2b; }
.tools { width: 39px; padding-left: 1px; margin-right: 1px; background: #535353; border-right: 1px solid #2b2b2b; flex: none; }
.collapse { height: 12px; padding: 3px 3px; margin-left: -1px; background: linear-gradient(#3e3e3e, #333); border-bottom: 1px solid #2b2b2b; }
.hgrip { display: block; width: 19px; height: 3px; margin: 4px 0 9px 9px; background: repeating-linear-gradient(90deg, #333 0 1px, #666 1px 2px); }
.tool { width: 26px; height: 26px; margin-left: 5px; }
.tsep { display: block; height: 1px; margin: 1px 4px; background: #3a3a3a; }
.toolsel { height: 26px; margin: 3px 3px 0 3px; border: 1px solid #2b2b2b; background: #3a3a3a; }
.toolsel .tool { margin: -1px 0 0 1px; }
.mini { margin: 0 0 0 -1px; }
.colors { margin: 2px 0 0 3px; }

.doc { display: flex; flex-direction: column; width: 1592px; flex: none; }
.doctabs { height: 20px; background: linear-gradient(#444, #3a3a3a); }
.doctab { display: flex; align-items: center; width: 228px; height: 20px; padding-left: 10px; background: #535353; border-right: 1px solid #2b2b2b; font-weight: 600; font-size: 10.5px; letter-spacing: .17px; white-space: nowrap; color: #e4e4e4; }
.doctab span { width: 204px; }
.doctab b { font-size: 13px; }
.stage { display: flex; height: 929px; }
.canvas { flex: 1; padding: 10px 0 0 334px; background: #282828; }
.artboard { box-shadow: 0 3px 6px #151515; }
.arttext { font: 700 14px Lato, sans-serif; fill: #5d79cf; }
.arttext .gray { fill: #b3b3b3; } .arttext .soft { fill: #7c91d8; }
.arttext rect { fill: #ebebeb; }
.vscroll { width: 16px; background: linear-gradient(90deg, #383838, #444); }
.status { display: flex; height: 17px; line-height: 15px; margin-bottom: 2px; }
.zoom { width: 49px; padding-left: 7px; letter-spacing: -.2px; background: #3f3f3f; }
.sicon { width: 24px; padding: 1px 6px; background: #535353; border-right: 1px solid #2b2b2b; }
.docsize { width: 171px; text-align: center; background: #535353; line-height: 16px; letter-spacing: -.2px; border-right: 1px solid #2b2b2b; }
.sarrow { width: 13px; background: #666; padding: 4px 3px; }
.sarrow i { display: block; border: 5px solid transparent; border-left: 7px solid #fff; border-right: 0; }
.hscroll { flex: 1; background: linear-gradient(#383838, #444); }
.corner { width: 16px; background: #535353; }

.tabs { display: flex; align-items: stretch; height: 18px; line-height: 17px; font-weight: 600; letter-spacing: -.3px; color: #8e8e8e; background: linear-gradient(#404040, #383838); border-bottom: 1px solid #666; white-space: nowrap; flex: none; }
.tabs span { padding-left: 7px; border-right: 1px solid #2b2b2b; }
.tabs .on { background: #535353; color: #ececec; margin-bottom: -1px; box-shadow: inset 0 1px #666; }
.tabs svg { margin: 4px 3px 0 auto; }
.bottomtabs { letter-spacing: -.15px; }
.bottomtabs .b1 { width: 72px; } .bottomtabs .b2 { width: 55px; padding-left: 6px; }

.dock { width: 286px; margin-left: 2px; border-left: 1px solid #2b2b2b; border-right: 1px solid #2b2b2b; background: #535353; overflow: hidden; flex: none; }
.dockc { display: flex; justify-content: flex-end; padding-right: 0; }
.gap { box-shadow: 0 -2px #2b2b2b; margin-top: 3px; }
.t1 { width: 41px; } .t2 { width: 59px; } .t3 { width: 74px; } .t4 { width: 42px; } .t5 { width: 63px; }
.t6 { width: 44px; } .t7 { width: 56px; } .t8 { width: 41px; } .t9 { width: 50px; } .t10 { width: 60px; } .t11 { width: 61px; }
.swatchbody { display: flex; justify-content: space-between; height: 97px; background: #484848; }
.swatches { display: grid; grid-template-columns: repeat(22, 12px); grid-auto-rows: 12px; align-content: start; padding-top: 1px; }
.swatches i { border-right: 1px solid #333; border-bottom: 1px solid #333; }
.swscroll { width: 16px; background: linear-gradient(90deg, #3a3a3a, #454545); }
.swfoot { display: flex; align-items: center; height: 18px; border-top: 1px solid #666; padding-left: 216px; }
.swfoot .dim { margin: 0 17px 0 17px; opacity: .6; }
.adjust { height: 102px; padding: 4px 0 0 8px; }
.adjust strong { font-size: 11px; font-weight: 600; letter-spacing: -.15px; color: #fff; }
.adjicons { margin: 5px 0 0 26px; }
.ltabs { margin-top: 3px; }
.lrow { display: flex; align-items: center; padding-left: 4px; border-bottom: 1px solid #3a3a3a; box-shadow: 0 1px #666; }
.lf { height: 27px; } .lb { height: 28px; } .lk { height: 30px; box-shadow: none; padding-bottom: 2px; }
.kind { width: 70px; padding: 0 4px 0 6px; } .kind span { margin-right: 12px; }
.ficons { margin-left: 12px; }
.blend { width: 111px; padding: 0 4px 0 7px; }
.l-op { width: 42px; margin-left: 7px; white-space: nowrap; }
.pct { width: 36px; height: 19px; line-height: 17px; } .lrow .drop { width: 18px; height: 19px; }
.l-lock { margin: 0 0 0 2px; width: 33px; } .l-fill { margin-left: 26px; width: 20px; }
.layers { display: flex; height: 347px; }
.list { width: 270px; overflow: hidden; border-right: 1px solid #2b2b2b; flex: none; }
.ly { display: flex; align-items: center; height: 39px; border-bottom: 1px solid #333; white-space: nowrap; }
.ly.s { height: 23px; }
.ly.sel { background: linear-gradient(90deg, #535353 30px, #5a6779 30px); }
.ey { display: flex; align-items: center; width: 31px; height: 100%; padding-left: 8px; border-right: 1px solid #333; flex: none; }
.ly > span:last-child, .n9 { margin-top: 2px; }
.tri { width: 0; flex: none; }
.dn { border: 5px solid transparent; border-top: 7px solid #e6e6e6; border-bottom: 0; }
.rt { border: 5px solid transparent; border-left: 7px solid #e6e6e6; border-right: 0; margin-right: 3px; }
.d0 { margin-left: 4px; } .d1 { margin-left: 21px; } .d2 { margin-left: 19px; }
.dn + svg { margin-left: 2px; } .rt + svg { margin-left: 2px; } .rt + .f4 { margin-left: 2px; }
.n1 { margin-left: 10px; } .n2 { margin-left: 11px; } .n3 { margin-left: 11px; }
.lt { margin-left: 42px; } .n4 { margin-left: 18px; }
.lv { margin-left: 35px; } .n5 { margin-left: 10px; letter-spacing: -.15px; } .n6 { margin-left: 12px; letter-spacing: -.15px; }
.thumb { margin-left: 0; } .n7 { margin-left: 7px; }
.lv2 { margin-left: 3px; } .n8 { margin-left: 9px; letter-spacing: -.15px; }
.bgthumb { width: 32px; height: 32px; margin-left: 3px; border: 1px solid #111; background: #fff; }
.n9 { margin-left: 12px; font-style: italic; } .bglock { margin: 3px 0 0 108px; }
.lscroll { flex: 1; display: flex; flex-direction: column; align-items: center; background: #3f3f3f; }
.up { border: 3px solid transparent; border-bottom-color: #ddd; border-top: 0; margin: 7px 0 8px; }
.thumbbar { width: 12px; height: 293px; border-radius: 3px; background: linear-gradient(90deg, #808080, #666); }
.down { border: 3px solid transparent; border-top-color: #ddd; border-bottom: 0; margin-top: 27px; }
.lfoot { height: 19px; border-top: 1px solid #666; }
.lfoot text { font: italic 600 13px "Liberation Serif", serif; fill: #ccc; }
.char { height: 226px; padding: 6px 0 0 3px; }
.char hr { width: 211px; height: 2px; margin: 0; border: 0; background: linear-gradient(#3a3a3a 50%, #666 50%); }
.cr { display: flex; align-items: flex-start; padding-left: 2px; }
.cr svg { overflow: visible; }
.r1 { height: 24px; padding-left: 6px; } .fa { width: 91px; } .fb { width: 57px; margin-left: 10px; }
.r2 { height: 24px; margin-top: 3px; } .r3 { height: 24px; } .fc { width: 60px; margin-left: 2px; padding-left: 4px; } .i2 { margin-left: 6px; } .fd { width: 55px; margin-left: 2px; padding-left: 4px; }
.r4 { height: 20px; margin-top: 3px; } .r5 { height: 22px; } .r5 .field { height: 18px; line-height: 17px; } .r4 .field { height: 18px; line-height: 17px; }
.fe { width: 54px; margin-left: 3px; } .i4 { margin-left: 46px; } .f2 { margin-left: 4px; }
.l-color { margin: 1px 0 0 33px; width: 36px; }
.colorbox { width: 54px; height: 18px; border: 1px solid #2b2b2b; background: #5674ce; }
.ti { font-family: "Liberation Serif", serif; fill: #c4c4c4; } .s9 { font-size: 9px; } .s13 { font-size: 13px; } .s14 { font-size: 14px; } .dkt { fill: #222; font-weight: bold; }
.glyphs { display: grid; grid-template-columns: repeat(8, 24.200px); height: 30px; padding-left: 7px; align-items: center; justify-items: center; font: 14px/16px "Liberation Serif", serif; color: #c8c8c8; white-space: nowrap; }
.glyphs small { font-size: 10px; } .glyphs sup { font-size: 8px; line-height: 0; } .glyphs sub { font-size: 8px; line-height: 0; }
.gb { font-size: 16px; color: #858585; } .gb sup { font-size: 11px; }
.over { border-top: 1px solid #858585; line-height: 13px; }
.r6 { margin-top: 4px; padding-left: 6px; } .lang { width: 106px; padding: 0 4px 0 7px; } .aa { margin-left: 6px; width: 20px; font: 13px/16px "Liberation Serif", serif; } .aa sub { font-size: 13px; line-height: 0; } .strong { width: 65px; padding: 0 4px 0 7px; }

.taskbar { display: flex; height: 30px; background: #060606; }
.tb { display: flex; align-items: center; justify-content: center; width: 37px; height: 30px; flex: none; }
.tb:first-child { width: 36px; }
.tv svg { margin-right: 3px; }
.run { background: linear-gradient(#9fe8c4, #9fe8c4) center bottom / 28px 2px no-repeat; }
.active { background: linear-gradient(#9fe8c4, #9fe8c4) center bottom / 37px 2px no-repeat, #3d3d3d; }
.app { width: 16px; height: 16px; border: 1px solid; font: 600 9px/13px "Open Sans", sans-serif; text-align: center; }
.br { color: #f0b400; background: #2a1c00; } .ps { color: #8fc3ff; background: #0a0f5c; } .ai { color: #ff9f2e; background: #2c1500; } .id { color: #e83d94; background: #33051d; }
.tray { display: flex; align-items: center; margin-left: auto; }
.clock { margin-left: 8px; width: 45px; font-size: 11.500px; letter-spacing: -.4px; color: #fff; }
.note { margin-right: 18px; }
.peek { width: 1px; height: 30px; margin-right: 4px; background: #666; }

.notes { position: absolute; left: 0; top: 0; pointer-events: none; }
.notetext { font: 32.500px Lato, sans-serif; font-variant-ligatures: none; fill: #ed1c24; }
```
FILE: script.js
```js
// Default swatch set, row by row.
const rows = [
  "ff0000 ffff00 00ff00 00ffff 0000ff ff00ff ffffff ebebeb e1e1e1 d7d7d7 cccccc c2c2c2 b7b7b7 acacac a0a0a0 959595 ed1c24 fff200 00a651 00aeef 2e3192 ec008c",
  "898989 7d7d7d 707070 626262 555555 464646 363636 262626 111111 000000 f7977a f9ad81 fdc68a fff79a c4df9b a2d39c 82ca9d 7bcdc8 6ecff6 7ea7d8 8493ca 8882be",
  "a187be bc8dbf f49ac2 f6989d f26c4f f68e55 fbaf5c fff467 acd372 7cc576 3bb878 1abbb4 00bff3 438cca 5574b9 605ca8 855fa8 a763a8 f06ea9 f26d7d ed1c24 f26522",
  "f7941d fff200 8dc73f 39b54a 00a651 00a99d 00aeef 0072bc 0054a6 2e3192 662d91 92278f ec008c ed145b 9e0b0f a0410d a36209 aba000 598527 1a7b30 007236 00746b",
  "0076a3 004b80 003471 1b1464 440e62 630460 9e005d 9e0039 790000 7b2e00 7d4900 827b00 406618 005e20 005826 005952 005b7f 003663 002157 0d004c 32004b 4b0049",
  "7b0046 7a0026 c7b299 998675 736357 534741 362f2d c69c6d a67c52 8c6239 754c24 603913"
];
const grid = document.getElementById("swatches");
for (const color of rows.join(" ").split(" ")) {
  const cell = document.createElement("i");
  cell.style.background = "#" + color;
  grid.append(cell);
}
```
